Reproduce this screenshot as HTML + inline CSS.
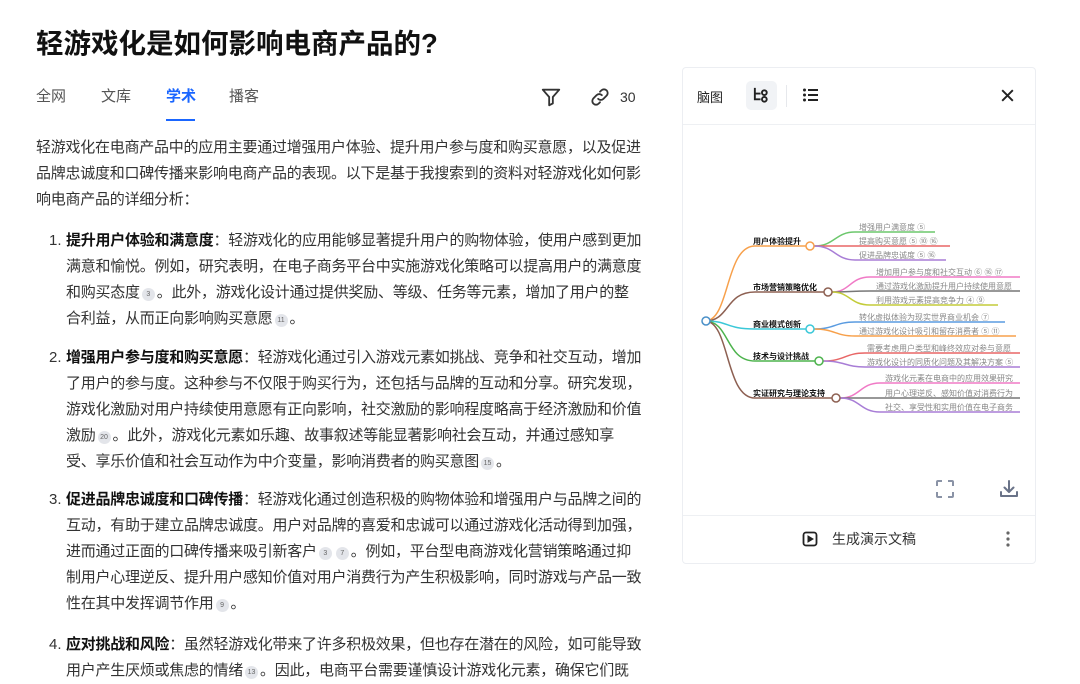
<!DOCTYPE html>
<html><head><meta charset="utf-8"><style>
*{margin:0;padding:0;box-sizing:border-box}
body{width:1080px;height:683px;overflow:hidden;background:#fff;font-family:"Liberation Sans","Noto Sans CJK SC",sans-serif;color:#333;position:relative}
.a{position:absolute;white-space:nowrap}
h1{position:absolute;left:36px;top:25px;font-size:27.5px;font-weight:bold;color:#111;line-height:38px}
.tab{position:absolute;top:87px;font-size:15px;color:#555;line-height:20px}
.l{position:absolute;left:36px;font-size:15px;line-height:26px;color:#333;white-space:nowrap;letter-spacing:-0.25px}
.i{left:66px}
.n{position:absolute;left:49px;font-size:15px;line-height:26px;color:#333}
b{color:#111}
.c{display:inline-block;width:13px;height:13px;border-radius:50%;background:#e3e5ea;color:#666;font-size:7px;line-height:13px;text-align:center;vertical-align:1px;margin:0 2px;letter-spacing:0}
.panel{position:absolute;left:682px;top:67px;width:354px;height:497px;border:1px solid #eceef2;border-radius:4px}
</style></head><body>
<h1>轻游戏化是如何影响电商产品的?</h1>
<div class="tab" style="left:36px">全网</div>
<div class="tab" style="left:101px">文库</div>
<div class="tab" style="left:166px;color:#1a66ff;font-weight:bold">学术</div>
<div class="a" style="left:166px;top:119px;width:29px;height:2px;background:#1a66ff"></div>
<div class="tab" style="left:229px">播客</div>
<svg class="a" style="left:540px;top:86px" width="22" height="22" viewBox="0 0 24 24" fill="none" stroke="#333" stroke-width="2" stroke-linejoin="round"><path d="M3 4h18l-7 8v7l-4 2v-9z"/></svg>
<svg class="a" style="left:589px;top:86px" width="22" height="22" viewBox="0 0 24 24" fill="none" stroke="#333" stroke-width="2" stroke-linecap="round"><path d="M10 14a4 4 0 0 0 5.7 0l3.5-3.5a4 4 0 0 0-5.7-5.7l-1.5 1.5"/><path d="M14 10a4 4 0 0 0-5.7 0l-3.5 3.5a4 4 0 0 0 5.7 5.7l1.5-1.5"/></svg>
<div class="tab" style="left:620px;color:#333;font-size:14px">30</div>

<div class="l" style="top:135px">轻游戏化在电商产品中的应用主要通过增强用户体验、提升用户参与度和购买意愿，以及促进</div>
<div class="l" style="top:161px">品牌忠诚度和口碑传播来影响电商产品的表现。以下是基于我搜索到的资料对轻游戏化如何影</div>
<div class="l" style="top:187px">响电商产品的详细分析：</div>

<div class="n" style="top:228px">1.</div>
<div class="l i" style="top:228px"><b>提升用户体验和满意度</b>：轻游戏化的应用能够显著提升用户的购物体验，使用户感到更加</div>
<div class="l i" style="top:254px">满意和愉悦。例如，研究表明，在电子商务平台中实施游戏化策略可以提高用户的满意度</div>
<div class="l i" style="top:280px">和购买态度<span class="c">3</span>。此外，游戏化设计通过提供奖励、等级、任务等元素，增加了用户的整</div>
<div class="l i" style="top:306px">合利益，从而正向影响购买意愿<span class="c">11</span>。</div>

<div class="n" style="top:345px">2.</div>
<div class="l i" style="top:345px"><b>增强用户参与度和购买意愿</b>：轻游戏化通过引入游戏元素如挑战、竞争和社交互动，增加</div>
<div class="l i" style="top:371px">了用户的参与度。这种参与不仅限于购买行为，还包括与品牌的互动和分享。研究发现，</div>
<div class="l i" style="top:397px">游戏化激励对用户持续使用意愿有正向影响，社交激励的影响程度略高于经济激励和价值</div>
<div class="l i" style="top:423px">激励<span class="c">20</span>。此外，游戏化元素如乐趣、故事叙述等能显著影响社会互动，并通过感知享</div>
<div class="l i" style="top:449px">受、享乐价值和社会互动作为中介变量，影响消费者的购买意图<span class="c">15</span>。</div>

<div class="n" style="top:487px">3.</div>
<div class="l i" style="top:487px"><b>促进品牌忠诚度和口碑传播</b>：轻游戏化通过创造积极的购物体验和增强用户与品牌之间的</div>
<div class="l i" style="top:513px">互动，有助于建立品牌忠诚度。用户对品牌的喜爱和忠诚可以通过游戏化活动得到加强，</div>
<div class="l i" style="top:539px">进而通过正面的口碑传播来吸引新客户<span class="c">3</span><span class="c">7</span>。例如，平台型电商游戏化营销策略通过抑</div>
<div class="l i" style="top:565px">制用户心理逆反、提升用户感知价值对用户消费行为产生积极影响，同时游戏与产品一致</div>
<div class="l i" style="top:591px">性在其中发挥调节作用<span class="c">9</span>。</div>

<div class="n" style="top:632px">4.</div>
<div class="l i" style="top:632px"><b>应对挑战和风险</b>：虽然轻游戏化带来了许多积极效果，但也存在潜在的风险，如可能导致</div>
<div class="l i" style="top:658px">用户产生厌烦或焦虑的情绪<span class="c">13</span>。因此，电商平台需要谨慎设计游戏化元素，确保它们既</div>

<div class="panel"></div>
<div class="a" style="left:697px;top:87px;font-size:13px;color:#222">脑图</div>
<div class="a" style="left:746px;top:81px;width:31px;height:29px;border-radius:5px;background:#f1f3f6"></div>
<svg class="a" style="left:752px;top:86px" width="19" height="19" viewBox="0 0 20 20" fill="none" stroke="#222" stroke-width="2"><path d="M3 2v12h6M3 8h6"/><circle cx="13" cy="7" r="2.5"/><circle cx="13" cy="14" r="2.5"/></svg>
<div class="a" style="left:786px;top:85px;width:1px;height:22px;background:#e6e8ec"></div>
<svg class="a" style="left:802px;top:86px" width="18" height="18" viewBox="0 0 18 18" fill="#222"><circle cx="2.5" cy="4" r="1.5"/><circle cx="2.5" cy="9" r="1.5"/><circle cx="2.5" cy="14" r="1.5"/><rect x="6" y="3" width="10" height="2"/><rect x="6" y="8" width="10" height="2"/><rect x="6" y="13" width="10" height="2"/></svg>
<svg class="a" style="left:999px;top:87px" width="17" height="17" viewBox="0 0 16 16" stroke="#222" stroke-width="1.8"><path d="M3 3l10 10M13 3L3 13"/></svg>
<div class="a" style="left:683px;top:124px;width:352px;height:1px;background:#eef0f3"></div>

<svg class="a" style="left:683px;top:125px" width="337" height="380" viewBox="683 125 337 380" font-family="Liberation Sans, Noto Sans CJK SC, sans-serif">
<g fill="none" stroke-width="1.5">
<path d="M705 321 C730 321 725 246 755 246 H806" stroke="#f7a04b"/>
<path d="M705 321 C730 321 725 292 755 292 H824" stroke="#8d6052"/>
<path d="M705 321 C730 321 725 329 755 329 H806" stroke="#3bc8d8"/>
<path d="M705 321 C730 321 725 361 755 361 H815" stroke="#4db34d"/>
<path d="M705 321 C730 321 725 398 755 398 H832" stroke="#8d6052"/>
<path d="M814 246 C835 246 835 232 855 232 H935" stroke="#6cc76c"/>
<path d="M814 246 C835 246 835 246 855 246 H950" stroke="#e86666"/>
<path d="M814 246 C835 246 835 260 855 260 H946" stroke="#a87dd6"/>
<path d="M832 292 C850 292 850 277 870 277 H1020" stroke="#f07ac6"/>
<path d="M832 292 C850 292 850 291 870 291 H1020" stroke="#777"/>
<path d="M832 292 C850 292 850 305 870 305 H998" stroke="#c3cc3a"/>
<path d="M814 329 C835 329 835 322 855 322 H1005" stroke="#5a9be0"/>
<path d="M814 329 C835 329 835 336 855 336 H1016" stroke="#f7a04b"/>
<path d="M823 361 C845 361 845 353 865 353 H1020" stroke="#e86666"/>
<path d="M823 361 C845 361 845 367 865 367 H1020" stroke="#a87dd6"/>
<path d="M840 398 C860 398 860 383 880 383 H1020" stroke="#f07ac6"/>
<path d="M840 398 C860 398 860 398 880 398 H1020" stroke="#777"/>
<path d="M840 398 C860 398 860 412 880 412 H1020" stroke="#a87dd6"/>
</g>
<g fill="#fff" stroke-width="1.5">
<circle cx="706" cy="321" r="4" stroke="#4a90c8"/>
<circle cx="810" cy="246" r="4" stroke="#f7a04b"/>
<circle cx="828" cy="292" r="4" stroke="#8d6052"/>
<circle cx="810" cy="329" r="4" stroke="#3bc8d8"/>
<circle cx="819" cy="361" r="4" stroke="#4db34d"/>
<circle cx="836" cy="398" r="4" stroke="#8d6052"/>
</g>
<g font-size="8" font-weight="bold" fill="#111">
<text x="753" y="244">用户体验提升</text>
<text x="753" y="290">市场营销策略优化</text>
<text x="753" y="327">商业模式创新</text>
<text x="753" y="359">技术与设计挑战</text>
<text x="753" y="396">实证研究与理论支持</text>
</g>
<g font-size="8" fill="#888">
<text x="859" y="230">增强用户满意度 ⑤</text>
<text x="859" y="244">提高购买意愿 ⑤ ⑩ ⑯</text>
<text x="859" y="258">促进品牌忠诚度 ⑤ ⑯</text>
<text x="876" y="275">增加用户参与度和社交互动 ⑥ ⑯ ⑰</text>
<text x="876" y="289">通过游戏化激励提升用户持续使用意愿</text>
<text x="876" y="303">利用游戏元素提高竞争力 ④ ⑨</text>
<text x="859" y="320">转化虚拟体验为现实世界商业机会 ⑦</text>
<text x="859" y="334">通过游戏化设计吸引和留存消费者 ⑤ ⑪</text>
<text x="867" y="351">需要考虑用户类型和峰终效应对参与意愿</text>
<text x="867" y="365">游戏化设计的同质化问题及其解决方案 ⑤</text>
<text x="885" y="381">游戏化元素在电商中的应用效果研究</text>
<text x="885" y="396">用户心理逆反、感知价值对消费行为</text>
<text x="885" y="410">社交、享受性和实用价值在电子商务</text>
</g>
</svg>

<svg class="a" style="left:935px;top:479px" width="20" height="20" viewBox="0 0 20 20" fill="none" stroke="#8a93a6" stroke-width="2"><path d="M2 7V3a1 1 0 0 1 1-1h4M13 2h4a1 1 0 0 1 1 1v4M18 13v4a1 1 0 0 1-1 1h-4M7 18H3a1 1 0 0 1-1-1v-4"/></svg>
<svg class="a" style="left:998px;top:478px" width="22" height="22" viewBox="0 0 22 22" fill="none" stroke="#6a7388" stroke-width="2" stroke-linecap="round" stroke-linejoin="round"><path d="M11 3v11M6.5 9.5L11 14l4.5-4.5M3 14v4h16v-4"/></svg>
<div class="a" style="left:683px;top:515px;width:352px;height:1px;background:#eef0f3"></div>
<svg class="a" style="left:802px;top:531px" width="16" height="16" viewBox="0 0 16 16" fill="none" stroke="#222" stroke-width="1.8"><rect x="1.5" y="1.5" width="13" height="13" rx="2.5"/><path d="M6 5v6l5-3z" fill="#222" stroke-width="1"/></svg>
<div class="a" style="left:832px;top:530px;font-size:14px;color:#333;line-height:18px">生成演示文稿</div>
<svg class="a" style="left:1004px;top:530px" width="8" height="18" viewBox="0 0 8 18" fill="#666"><circle cx="4" cy="3" r="1.6"/><circle cx="4" cy="9" r="1.6"/><circle cx="4" cy="15" r="1.6"/></svg>
</body></html>
